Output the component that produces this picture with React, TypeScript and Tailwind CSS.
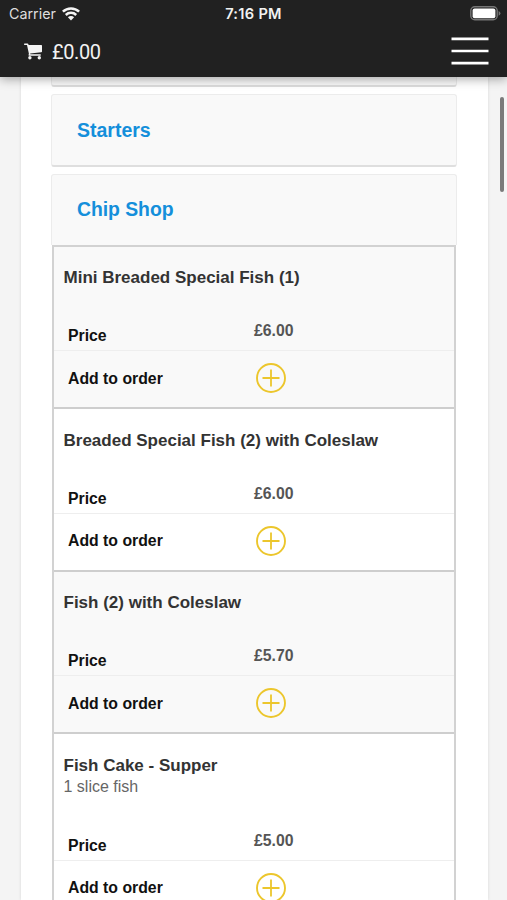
import { useState } from "react";

type MenuItem = {
  title: string;
  note?: string;
  price: string;
};

const items: MenuItem[] = [
  { title: "Mini Breaded Special Fish (1)", price: "£6.00" },
  { title: "Breaded Special Fish (2) with Coleslaw", price: "£6.00" },
  { title: "Fish (2) with Coleslaw", price: "£5.70" },
  { title: "Fish Cake - Supper", note: "1 slice fish", price: "£5.00" },
];

const CartIcon = () => (
  <svg width="18" height="17" viewBox="0 0 18 17" fill="#f5f5f5">
    <path d="M0.6 0.5 H3.5 Q4.2 0.5 4.4 1.2 L4.6 2 H17.4 Q18 2 18 2.7 V8.4 Q18 9.1 17.3 9.2 L6.2 10.5 L6.3 11.3 H16.2 Q16.9 11.3 16.9 12 Q16.9 12.8 16.2 12.8 H5.2 Q4.5 12.8 4.5 12.1 L4.9 10.8 L3 1.9 H0.6 Q0 1.9 0 1.2 Q0 0.5 0.6 0.5 Z" />
    <circle cx="5.9" cy="14.7" r="1.7" />
    <circle cx="15.3" cy="14.7" r="1.7" />
  </svg>
);

const WifiIcon = () => (
  <svg width="18" height="14" viewBox="0 0 18 14" fill="none" stroke="#f5f5f5" strokeWidth="2.5">
    <path d="M0.9 4.7 A11.6 11.6 0 0 1 17.1 4.7" />
    <path d="M3.8 8 A7.4 7.4 0 0 1 14.2 8" />
    <path d="M9 13.4 L5.9 10.3 A4.4 4.4 0 0 1 12.1 10.3 Z" fill="#f5f5f5" stroke="none" />
  </svg>
);

const BatteryIcon = () => (
  <svg width="31" height="15" viewBox="0 0 31 15" fill="none">
    <rect x="0.8" y="0.8" width="26.4" height="13" rx="4" stroke="#767676" strokeWidth="1.4" />
    <rect x="2.6" y="2.4" width="22.8" height="9.8" rx="2" fill="#fff" />
    <path d="M28.6 5 Q30.4 6 30.4 7.3 Q30.4 8.8 28.6 9.8 Z" fill="#767676" />
  </svg>
);

const MenuIcon = () => (
  <svg width="38" height="30" viewBox="0 0 38 30" stroke="#fff" strokeWidth="2.6">
    <path d="M0.5 2.9 H37.5 M0.5 15 H37.5 M0.5 27.1 H37.5" />
  </svg>
);

const PlusIcon = () => (
  <svg width="30" height="30" viewBox="0 0 30 30" fill="none" stroke="#ecc62c">
    <circle cx="15" cy="15" r="14" strokeWidth="1.9" />
    <path d="M15 6.5 V23.5 M6.5 15 H23.5" strokeWidth="1.8" />
  </svg>
);

const Header = () => (
  <header className="relative z-10 h-[76.5px] shrink-0 bg-[#212121] text-[#f2f2f2] shadow-[0_2px_10px_rgba(0,0,0,0.35)]">
    <div className="grid h-7 grid-cols-3 items-center pl-[9px] pr-[6px] font-[Inter,sans-serif]">
      <div className="flex items-center gap-[6px]">
        <span className="text-[14.3px] text-[#dedede]">Carrier</span>
        <WifiIcon />
      </div>
      <span className="pt-px pr-[3px] text-center text-[14.6px] font-semibold tracking-[0.3px] whitespace-nowrap">7:16 PM</span>
      <div className="-mt-px flex justify-end">
        <BatteryIcon />
      </div>
    </div>
    <div className="flex h-[46px] items-center justify-between pl-6 pr-[18px]">
      <div className="flex items-center gap-[10px] pt-px">
        <CartIcon />
        <span className="font-[Roboto,sans-serif] text-[20px] leading-none tracking-[-0.4px]">£0.00</span>
      </div>
      <button aria-label="Menu">
        <MenuIcon />
      </button>
    </div>
  </header>
);

const MenuRow = ({ item }: { item: MenuItem }) => (
  <div className="border-b-2 border-[#cecece] odd:bg-[#f9f9f9] even:bg-white">
    <div className={item.note ? "flex h-[126.5px] flex-col border-b border-[#eeeeee]" : "flex h-[104.5px] flex-col border-b border-[#eeeeee]"}>
      <div className="flex-1 pl-[9.5px] pt-[21.5px]">
        <h3 className="text-[17px] leading-5 font-bold text-[#333]">{item.title}</h3>
        {item.note && <p className="text-base leading-[22px] text-[#666]">{item.note}</p>}
      </div>
      <div className="flex h-[29px] pl-[14px] font-bold">
        <span className="w-[186px] pt-[5px] text-[15.8px] leading-5 text-[#111]">Price</span>
        <span className="text-[15.8px] leading-5 text-[#555]">{item.price}</span>
      </div>
    </div>
    <div className="flex h-[56px] pl-[14px]">
      <span className="w-[187.5px] pt-[17.5px] text-[15.8px] leading-5 font-bold text-[#111]">Add to order</span>
      <button className="mt-[12px] h-[30px] w-[30px]" aria-label="Add to order">
        <PlusIcon />
      </button>
    </div>
  </div>
);

export default function App() {
  const [open, setOpen] = useState(true);

  return (
    <div className="relative flex h-[900px] w-[507px] flex-col overflow-hidden bg-[#f4f4f4] font-['Liberation_Sans',Arial,sans-serif]">
      <Header />
      <main className="ml-[20.5px] w-[467px] flex-1 overflow-hidden bg-white px-[30.5px] shadow-[0_0_3px_rgba(0,0,0,0.12)]">
        <div className="h-[10.5px] rounded-b-[3px] border border-t-0 border-b-2 border-[#ececec] border-b-[#dcdcdc] bg-[#f9f9f9]" />
        <section className="mt-[7px] flex h-[72.5px] items-center rounded-[3px] border border-b-2 border-[#ececec] border-b-[#dfdfdf] bg-[#f9f9f9] pt-px pl-[25px]">
          <h2 className="text-[19.5px] font-bold text-[#148fdb]">Starters</h2>
        </section>
        <section className="mt-[7px]">
          <div
            className="flex h-[71px] cursor-pointer items-center rounded-t-[3px] border border-b-0 border-[#ececec] bg-[#f9f9f9] pt-px pl-[25px]"
            onClick={() => setOpen(!open)}
          >
            <h2 className="text-[19.4px] font-bold tracking-[-0.05px] text-[#148fdb]">Chip Shop</h2>
          </div>
          {open && (
            <div className="mx-px border-2 border-b-0 border-[#d2d2d2]">
              {items.map((item) => (
                <MenuRow key={item.title} item={item} />
              ))}
            </div>
          )}
        </section>
      </main>
      {/* scroll indicator */}
      <div className="absolute top-[97px] right-[3px] h-[95px] w-[4px] rounded-full bg-[#7a7a7a]" />
    </div>
  );
}
